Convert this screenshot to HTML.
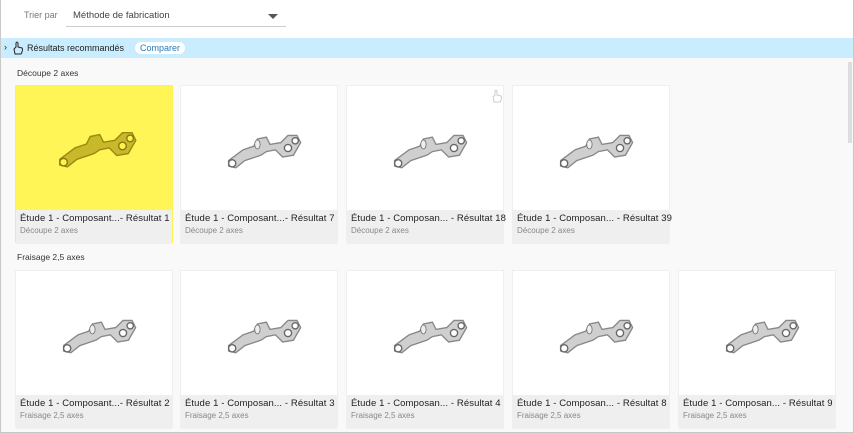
<!DOCTYPE html><html><head><meta charset="utf-8"><style>
*{margin:0;padding:0;box-sizing:border-box}
body{width:854px;height:433px;overflow:hidden;font-family:"Liberation Sans",sans-serif;background:#fff;position:relative}
.frame{position:absolute;left:0;top:0;width:854px;height:433px;border:1px solid #c8c8c8;border-top:none}
.hdr{position:absolute;left:1px;top:0;width:852px;height:38px;background:#fff}
.trier{position:absolute;left:23px;top:10px;font-size:9px;color:#777}
.sel{position:absolute;left:65px;top:5px;width:220px;height:22px;border-bottom:1px solid #ccc;font-size:9.5px;color:#444;padding:5px 0 0 7px}
.sel:after{content:"";position:absolute;right:8px;top:9px;border-left:5px solid transparent;border-right:5px solid transparent;border-top:5px solid #555}
.bar{position:absolute;left:1px;top:38px;width:852px;height:20px;background:#c9ecff;font-size:9px;color:#222}
.bar .t{position:absolute;left:26px;top:5px}
.bar .c{position:absolute;left:134px;top:4px;background:#fff;border-radius:7px;padding:1px 5px;color:#2a7cb8}
.content{position:absolute;left:1px;top:58px;width:852px;height:374px;background:#f9f9f9}
.sec{position:absolute;left:17px;font-size:8.5px;color:#333}
.card{position:absolute;width:158px;height:158px;background:#fff;border:1px solid #efefef}
.card .img{position:absolute;left:0;top:0;width:156px;height:124px}
.card .cap{position:absolute;left:0;top:124px;width:156px;height:34px;background:#efefef;padding:3px 0 0 4px}
.cap .a{font-size:9.5px;color:#222;white-space:nowrap;letter-spacing:0.1px}
.cap .b{font-size:8px;color:#888;margin-top:2px}
.sb{position:absolute;left:848px;top:62px;width:4px;height:81px;background:#ddd}
</style></head><body>
<svg width="0" height="0" style="position:absolute"><defs>
<g id="p"><path d="M-36 14 L-20 2 L-8 -2 L-4 -10 L6 -12 L10 -4 L22 -6 L30 -14 L40 -14 L44 -6 L36 8 L24 10 L16 2 L6 4 L0 8 L-18 14 L-28 22 L-36 20 Z" fill="#cfcfcf" stroke="#888" stroke-width="1.5"/>
<circle cx="-32" cy="17" r="4" fill="#fff" stroke="#666" stroke-width="1.5"/><circle cx="30" cy="0" r="4" fill="#fff" stroke="#666" stroke-width="1.5"/><circle cx="38" cy="-8" r="3.5" fill="#fff" stroke="#666" stroke-width="1.5"/><ellipse cx="-4" cy="-4" rx="3" ry="5" fill="#eee" stroke="#777"/></g>
<g id="y"><path d="M-36 14 L-20 2 L-8 -2 L-4 -10 L6 -12 L10 -4 L22 -6 L30 -14 L40 -14 L44 -6 L36 8 L24 10 L16 2 L6 4 L0 8 L-18 14 L-28 22 L-36 20 Z" fill="#c9b82a" stroke="#9a8a10" stroke-width="1.5"/>
<circle cx="-32" cy="17" r="4" fill="#fff34f" stroke="#8a7a10" stroke-width="1.5"/><circle cx="30" cy="0" r="4" fill="#fff34f" stroke="#8a7a10" stroke-width="1.5"/><circle cx="38" cy="-8" r="3.5" fill="#fff34f" stroke="#8a7a10" stroke-width="1.5"/></g>
</defs></svg>
<div class="hdr"><div class="trier">Trier par</div><div class="sel">Méthode de fabrication</div></div>
<div class="bar"><span style="position:absolute;left:3px;top:4px">›</span><svg style="position:absolute;left:11px;top:3px" width="12" height="14" viewBox="0 0 12 14"><path d="M3 13 L2 8 L4 6 L4 2 Q5 0 6 2 L6 6 L10 7 Q11 8 10 11 L9 13 Z" fill="none" stroke="#222" stroke-width="1"/></svg><span class="t">Résultats recommandés</span><span class="c">Comparer</span></div>
<div class="content"></div>
<div class="sb"></div>
<div class="sec" style="top:68px">Découpe 2 axes</div>
<div class="sec" style="top:252px">Fraisage 2,5 axes</div>

<div class="card" style="left:15px;top:85px;border-color:#fff34f"><div class="img" style="background:#fff556"><svg width="156" height="124"><use href="#y" transform="translate(78,60) scale(0.95)"/></svg></div><div class="cap"><div class="a">Étude 1 - Composant...- Résultat 1</div><div class="b">Découpe 2 axes</div></div></div>
<div class="card" style="left:180px;top:85px"><div class="img"><svg width="156" height="124"><use href="#p" transform="translate(80,62) scale(0.9)"/></svg></div><div class="cap"><div class="a">Étude 1 - Composant...- Résultat 7</div><div class="b">Découpe 2 axes</div></div></div>
<div class="card" style="left:346px;top:85px"><div class="img"><svg width="156" height="124"><use href="#p" transform="translate(80,62) scale(0.9)"/><path d="M147 16 L146 11 L148 9 L148 5 Q149 3 150 5 L150 9 L154 10 Q155 11 154 14 L153 16 Z" fill="none" stroke="#ccc"/></svg></div><div class="cap"><div class="a">Étude 1 - Composan... - Résultat 18</div><div class="b">Découpe 2 axes</div></div></div>
<div class="card" style="left:512px;top:85px"><div class="img"><svg width="156" height="124"><use href="#p" transform="translate(80,62) scale(0.9)"/></svg></div><div class="cap"><div class="a">Étude 1 - Composan... - Résultat 39</div><div class="b">Découpe 2 axes</div></div></div>

<div class="card" style="left:15px;top:270px"><div class="img"><svg width="156" height="124"><use href="#p" transform="translate(80,62) scale(0.9)"/></svg></div><div class="cap"><div class="a">Étude 1 - Composant...- Résultat 2</div><div class="b">Fraisage 2,5 axes</div></div></div>
<div class="card" style="left:180px;top:270px"><div class="img"><svg width="156" height="124"><use href="#p" transform="translate(80,62) scale(0.9)"/></svg></div><div class="cap"><div class="a">Étude 1 - Composan... - Résultat 3</div><div class="b">Fraisage 2,5 axes</div></div></div>
<div class="card" style="left:346px;top:270px"><div class="img"><svg width="156" height="124"><use href="#p" transform="translate(80,62) scale(0.9)"/></svg></div><div class="cap"><div class="a">Étude 1 - Composan... - Résultat 4</div><div class="b">Fraisage 2,5 axes</div></div></div>
<div class="card" style="left:512px;top:270px"><div class="img"><svg width="156" height="124"><use href="#p" transform="translate(80,62) scale(0.9)"/></svg></div><div class="cap"><div class="a">Étude 1 - Composan... - Résultat 8</div><div class="b">Fraisage 2,5 axes</div></div></div>
<div class="card" style="left:678px;top:270px"><div class="img"><svg width="156" height="124"><use href="#p" transform="translate(80,62) scale(0.9)"/></svg></div><div class="cap"><div class="a">Étude 1 - Composan... - Résultat 9</div><div class="b">Fraisage 2,5 axes</div></div></div>
<div class="frame"></div>
</body></html>
